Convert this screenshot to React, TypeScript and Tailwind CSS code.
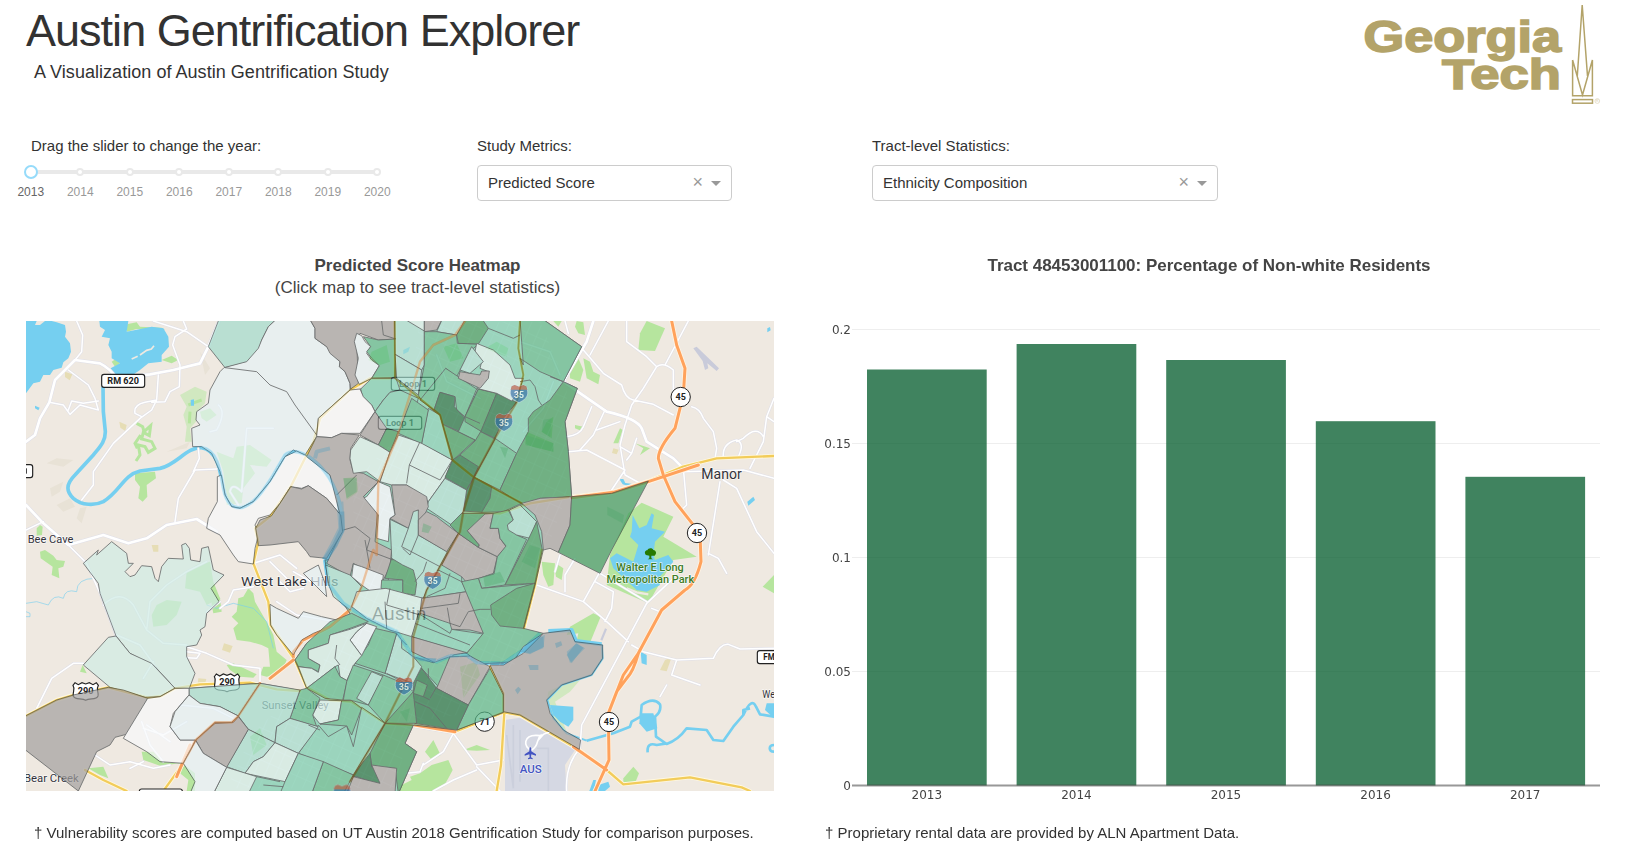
import React from "react";

const years = ["2013", "2014", "2015", "2016", "2017", "2018", "2019", "2020"];

const G = "#a3a09f";
const C1 = "#1d7040";
const C2 = "#3c995c";
const C3 = "#59b788";
const C4 = "#78ccae";
const C5 = "#a3dbcd";
const W3 = "#d0ece5";
const W2 = "#e6f2f6";
const W1 = "#f8fafc";

// [fill, points], painted in order; coordinates are in map units (3 per pixel)
const tracts: [string, string][] = [
  [C4, "1124,10 1565,10 1685,95 1630,200 1672,220 1635,320 1645,410 1655,545 1570,705 1545,810 1510,945 1500,1010 1450,1045 1370,1043 1450,1140 1450,1192 1310,1245 1180,1230 1155,1285 1190,1310 1135,1436 580,1436 620,1357 685,1243 655,1203 507,1140 507,1120 720,1105 850,1128 860,1117 825,1035 860,985 990,895 925,805 915,735 1060,720 1030,545 1075,500 1000,470 1065,290 1020,222 1125,190"],
  [C5, "598,10 565,95 615,158 690,140 718,100 725,75 745,35 772,10"],
  [W2, "772,10 745,35 725,75 715,100 680,140 612,158 600,170 570,225 565,265 530,290 528,315 540,330 515,340 518,395 545,395 575,415 600,470 615,540 635,575 660,580 700,560 750,500 795,425 820,405 855,420 890,365 895,310 990,225 990,205 975,170 958,155 960,140 920,95 885,70 885,40 868,10"],
  [G, "868,10 885,40 885,70 920,95 930,115 960,140 958,155 975,170 990,205 992,222 1015,205 1010,75 1020,55 1075,75 1128,72 1124,10"],
  [W2, "1010,55 1025,62 1035,80 1052,95 1040,115 1055,135 1078,152 1055,190 1018,208 1005,180 1015,130 1003,80"],
  [C3, "1030,65 1075,75 1128,72 1125,188 1055,190 1078,152 1055,130 1040,110 1052,95"],
  [C5, "1124,10 1213,10 1213,150 1205,165 1125,118"],
  [C5, "1125,118 1205,165 1195,240 1130,190"],
  [W3, "1150,10 1213,10 1213,48"],
  [G, "1213,10 1268,10 1250,45 1213,50"],
  [C5, "1268,10 1338,10 1310,60 1250,50"],
  [C3, "1213,50 1250,50 1310,60 1312,85 1375,87 1350,110 1310,185 1277,160 1260,305 1200,250 1195,240 1213,150"],
  [C4, "1022,222 1055,190 1128,190 1140,225 1110,232 1090,255 1065,290 1055,270 1028,245"],
  [C4, "1065,290 1090,255 1110,232 1140,225 1195,250 1170,330 1135,350 1095,340"],
  [W1, "895,310 990,225 1020,222 1030,245 1055,270 1065,290 1020,355 965,355 935,368 890,365"],
  [W1, "604,480 592,485 592,560 565,610 560,640 600,660 640,720 655,740 700,747 705,700 715,660 705,630 715,610 750,600 780,565 812,515 845,520 865,512 920,550 962,600 955,560 930,480 880,432 855,420 830,408 795,425 750,500 700,560 660,580 635,575 615,540"],
  [G, "890,365 935,368 965,355 1018,360 992,400 990,435 1000,470 1030,475 1075,500 1060,515 1030,545 1070,570 1072,600 1065,680 1115,705 1110,755 1090,795 1000,745 990,785 920,745 965,650 960,600 930,480 860,425"],
  [G, "707,640 720,615 755,602 780,565 812,515 845,522 865,512 920,550 962,600 968,650 920,730 870,725 860,710 835,680 750,690 715,692"],
  [G, "1065,290 1100,340 1075,390 1020,360"],
  [C2, "1075,390 1100,340 1135,350 1110,412"],
  [W3, "1020,365 1075,390 1110,412 1080,500 1040,470 1000,475 990,430 992,405"],
  [W3, "1135,360 1180,375 1200,380 1297,435 1275,490 1225,560 1160,510 1115,510 1080,500 1110,412"],
  [W3, "1200,380 1297,435 1260,495 1168,450"],
  [C4, "1225,280 1260,300 1297,435 1205,385"],
  [C3, "1175,250 1225,285 1205,385 1180,375 1135,355"],
  [C3, "1277,160 1370,222 1335,305 1310,285 1305,245 1260,232 1242,285 1200,255"],
  [C1, "1260,232 1305,245 1303,275 1335,310 1320,350 1268,328 1260,300 1242,285"],
  [C3, "1375,222 1430,235 1385,350 1370,378 1315,350 1335,305"],
  [C2, "1375,222 1430,235 1385,350 1335,320 1335,305"],
  [C2, "1268,328 1365,375 1300,435"],
  [C1, "1430,235 1490,262 1450,310 1425,370 1382,350"],
  [C3, "1425,370 1490,415 1440,525 1362,487"],
  [C2, "1382,350 1425,372 1362,487 1320,420 1365,378"],
  [C1, "1320,420 1375,455 1360,490 1340,525 1275,487 1298,435"],
  [C2, "1630,200 1672,220 1635,320 1645,410 1655,545 1560,550 1505,570 1440,525 1490,415 1500,395 1525,350 1525,310 1540,290 1590,255"],
  [C2, "1362,487 1505,565 1450,590 1385,592"],
  [C1, "1362,487 1415,515 1410,550 1385,592 1330,588 1340,525"],
  [C5, "1275,490 1340,525 1330,590 1295,630 1250,600 1220,580 1225,560"],
  [C3, "1500,10 1565,10 1685,95 1630,200 1560,170 1500,130 1510,150"],
  [C2, "1310,60 1338,10 1385,10 1405,40 1375,87 1315,85"],
  [W3, "1370,85 1420,105 1470,150 1485,190 1510,190 1495,235 1475,258 1430,235 1370,220 1405,170 1380,160 1385,140 1365,110"],
  [G, "1320,170 1380,180 1385,168 1408,168 1405,190 1380,220 1315,190"],
  [C5, "1355,95 1390,140 1350,175 1320,165"],
  [G, "1115,510 1160,510 1220,545 1225,575 1195,640 1175,640 1195,585 1185,590 1165,640 1110,610 1125,600"],
  [W2, "1040,545 1075,500 1110,515 1125,600 1110,610 1105,680 1070,670 1075,600 1032,548"],
  [C5, "1110,613 1165,640 1180,590 1195,585 1195,660 1282,710 1210,850 1100,830 1115,725"],
  [G, "1220,590 1250,605 1262,615 1315,655 1280,710 1195,660 1195,615"],
  [G, "1315,655 1375,697 1432,725 1420,775 1340,803 1325,785 1265,750 1285,710"],
  [C2, "1325,595 1420,595 1342,647 1378,690 1375,697 1315,655 1290,630"],
  [G, "1395,597 1420,595 1410,640 1435,640 1440,670 1458,695 1432,725 1375,697 1378,690 1342,647"],
  [C3, "1420,595 1465,585 1480,615 1462,630 1490,660 1520,673 1455,810 1385,820 1375,790 1422,777 1432,725 1458,693 1440,670 1435,640 1410,640"],
  [C5, "1468,585 1500,570 1550,620 1530,670 1490,660 1465,645 1462,630 1480,615"],
  [C2, "1525,673 1550,620 1567,705 1545,805 1455,810"],
  [G, "1505,565 1560,550 1655,545 1650,630 1615,712 1590,700 1570,705 1565,650 1545,600"],
  [C2, "1655,545 1775,535 1885,498 1775,705 1740,775 1615,712 1650,630"],
  [C5, "917,750 990,780 1025,815 990,885 940,845 925,805"],
  [W2, "850,775 895,750 915,805 920,845 890,815"],
  [W2, "750,868 770,880 835,910 850,890 905,905 950,915 930,935 880,955 845,975 820,1020 770,960 752,930"],
  [W2, "1000,747 1025,755 1090,780 1085,820 1100,825 1095,860 1025,810 995,785"],
  [C2, "1115,730 1148,750 1180,765 1190,805 1185,840 1148,835 1148,795 1095,790"],
  [C3, "1085,795 1148,795 1148,835 1083,820"],
  [C4, "1255,765 1325,800 1340,830 1210,850 1220,825"],
  [W3, "1098,820 1210,850 1200,895 1175,965 1110,945 1040,910 995,875 1010,830"],
  [G, "1205,850 1340,830 1375,885 1390,955 1350,945 1295,943 1290,925 1200,895"],
  [C4, "1195,895 1290,955 1295,943 1390,957 1340,1015 1175,965"],
  [G, "1175,965 1340,1013 1300,1020 1285,1040 1245,1043 1175,1010"],
  [C3, "1375,790 1385,820 1545,805 1510,940 1570,955 1510,995 1480,1040 1380,1047 1340,1015 1390,955 1325,800"],
  [C2, "1412,870 1490,820 1545,805 1510,940 1440,933 1415,900"],
  [G, "1510,1015 1570,955 1650,945 1665,980 1748,990 1748,1030 1715,1080 1625,1110 1580,1155 1590,1195 1630,1245 1682,1275 1678,1303 1500,1200 1450,1190 1450,1135 1410,1050 1450,1050"],
  [C3, "1180,1025 1240,1043 1290,1025 1260,1120 1200,1055"],
  [G, "1290,1025 1350,1023 1410,1055 1345,1170 1250,1120"],
  [C3, "1410,1060 1450,1140 1450,1192 1310,1245 1345,1170"],
  [C1, "1205,1060 1250,1120 1345,1170 1310,1245 1185,1225 1180,1135 1180,1100"],
  [C2, "1190,1095 1222,1110 1210,1145 1180,1135"],
  [C2, "1180,1135 1190,1225 1095,1225 1130,1150 1150,1105"],
  [C2, "1095,1225 1180,1230 1155,1285 1190,1310 1135,1436 1125,1360 1055,1355 1050,1315"],
  [C1, "1050,1315 1055,1355 1120,1425 1010,1385 995,1385"],
  [G, "1055,1350 1130,1360 1125,1436 980,1436 1000,1385 1080,1405"],
  [C5, "1130,955 1145,975 1145,1000 1180,1025 1205,1055 1180,1105 1095,1075"],
  [C3, "1065,940 1130,955 1095,1075 1005,1045 1045,990"],
  [C3, "825,1035 860,985 930,920 995,895 1045,920 990,940 930,960 925,985 865,1005 865,1030 900,1050 895,1070 875,1060 835,1055"],
  [W2, "990,975 1010,950 1040,925 1070,935 1025,1022"],
  [W3, "865,1005 925,985 930,960 990,943 1040,925 1010,950 990,975 1025,1022 1005,1045 980,1097 960,1085 955,1050 945,1055 860,1120 835,1055 875,1060 895,1072 900,1050 865,1030"],
  [C3, "860,1120 945,1055 960,1085 982,1097 968,1155 915,1150"],
  [W3, "900,1155 965,1157 955,1215 900,1227 878,1200"],
  [C3, "840,1125 860,1120 900,1150 878,1200 890,1235 810,1210"],
  [C3, "965,1157 995,1157 1025,1180 995,1260 980,1233 900,1227 955,1215"],
  [C4, "1025,1177 1095,1225 1000,1380 835,1315 895,1230 925,1265 980,1233 1000,1295"],
  [C3, "1000,1050 1090,1080 1045,1170 990,1155 970,1155 980,1100"],
  [C5, "1055,1070 1090,1085 1045,1170 1010,1150"],
  [C3, "1090,1080 1150,1105 1180,1130 1095,1225 1045,1170"],
  [C3, "910,1340 1000,1380 970,1436 875,1436"],
  [C5, "507,1120 720,1105 655,1203 600,1175 540,1165 507,1140"],
  [C5, "720,1105 840,1125 810,1210 770,1235 765,1283 685,1243 655,1203"],
  [C5, "770,1235 810,1210 895,1235 835,1315 765,1283"],
  [C5, "685,1243 765,1283 730,1325 700,1340 675,1375 620,1355"],
  [W3, "765,1283 835,1315 795,1400 675,1375 700,1340 730,1325"],
  [W3, "620,1357 710,1385 685,1436 580,1436"],
  [C4, "835,1315 910,1340 875,1436 780,1436 795,1400"],
  [W3, "190,745 235,705 230,720 275,680 320,715 325,745 340,745 315,770 330,785 345,780 365,752 395,755 405,790 415,800 425,755 445,730 490,732 485,690 497,685 508,700 512,735 540,740 545,700 565,695 580,765 612,780 573,820 597,860 560,895 555,935 540,945 545,960 530,990 500,995 500,1025 525,1075 508,1120 465,1120 405,1055 330,1015 288,963 240,835 235,805"],
  [W3, "265,967 288,963 330,1015 395,1045 465,1120 420,1145 375,1147 270,1117 190,1050"],
  [G, "10,1206 110,1155 160,1140 265,1117 310,1125 383,1150 330,1255 285,1267 270,1290 230,1310 175,1428 10,1300"],
  [W1, "383,1150 420,1145 465,1120 507,1120 507,1140 460,1195 450,1235 480,1275 527,1275 490,1345 420,1340 380,1310 310,1270"],
  [W2, "507,1140 540,1165 600,1175 655,1203 635,1222 585,1222 527,1275 480,1275 450,1235 465,1190"],
  [G, "527,1275 585,1225 640,1222 655,1205 685,1243 620,1357 550,1315"],
  [W2, "527,1277 550,1315 620,1357 580,1436 510,1436 525,1400 490,1345"],
];

// thin tract borders that subdivide the polygons above
const borders =
  "M615,158 L710,170 750,210 800,230 825,270 890,360 M1168,450 L1160,505 M1085,18 L1090,60 1128,72 M1405,40 L1480,70 1500,60 M1630,200 L1590,185 M1500,200 L1530,195 1545,215 1555,255 1565,270 M1335,305 L1380,325 M950,540 L1010,480 M970,645 L1005,635 1050,670 1040,705 1120,735 M1035,675 L1050,760 M1165,640 L1145,695 1260,755 M1148,700 L1170,720 1195,660 M1220,740 L1210,770 1185,800 M1290,775 L1275,820 1220,845 M1325,785 L1325,800 M1205,880 L1315,865 1320,835 M1282,878 L1290,925 1320,935 1345,890 1380,883 1412,883 M1185,925 L1350,990 M1225,1060 L1225,1090 M1185,1160 L1230,1180 1280,1240 M1230,1150 L1250,1115 M1210,1145 L1230,1155 M1095,860 L1100,940 M1110,820 L1100,870 1200,900 M1145,975 L1160,990 M865,1230 L900,1245 M730,1410 L790,1415 M710,1385 L780,1400 M950,990 L945,1030 960,1050 M1100,1075 L1165,1110";

const parks = [
  "65,60 72,68 62,85 75,88 62,110 88,112 80,130 60,135 35,125 32,115 45,90 48,68",
  "320,28 350,22 360,35 425,38 435,45 350,42 320,50",
  "425,135 455,122 475,135 455,145",
  "275,140 290,130 300,145 285,155",
  "345,475 405,470 408,490 380,510 382,545 368,560 355,550 360,515 345,495",
  "60,630 68,635 66,660 50,662 50,640",
  "60,710 75,705 100,722 110,735 135,738 130,755 115,760 118,790 95,780 98,755 62,730",
  "590,410 640,430 650,395 690,390 755,435 740,455 690,450 705,475 670,520 665,565 620,570 610,470",
  "540,290 570,280 590,300 560,320 545,310",
  "1860,55 1880,18 1935,40 1905,108 1855,105",
  "1670,18 1690,22 1695,60 1675,55 1665,35",
  "1600,18 1625,18 1615,35",
  "1650,175 1675,130 1690,165 1680,200 1650,190",
  "1690,130 1710,140 1720,170 1740,180 1735,208 1700,190",
  "1665,330 1690,335 1685,348 1665,340",
  "1825,595 1865,563 1960,605 1930,665 2030,725 1960,735 1885,865 1760,810 1770,720",
  "1640,960 1650,935 1720,895 1742,905 1710,983 1670,978 1675,955",
  "1565,740 1605,745 1600,810 1585,815 1570,780",
  "1605,765 1615,750 1630,760 1625,795 1608,785",
  "2228,815 2262,780 2262,835",
  "1810,1390 1840,1355 1857,1375 1845,1405 1810,1408",
  "655,850 670,845 685,820 700,835 705,860 745,930 760,960 770,1010 800,1035 790,1060 770,1080 740,1085 720,1080 730,1055 750,1055 745,1000 725,990 690,980 650,975 640,940 655,925 635,905 650,890",
  "620,1050 640,1045 710,1078 700,1088 660,1085 630,1065",
  "1215,1310 1240,1275 1262,1320 1235,1335",
  "1235,1350 1285,1335 1298,1365 1285,1390 1270,1415 1240,1428 1140,1428 1145,1410 1175,1395 1170,1385 1200,1375",
  "1330,1305 1370,1290 1410,1305 1370,1307",
  "410,870 440,855 485,860 470,900 440,930 400,935 395,900",
  "500,770 530,750 570,740 580,800 600,850 560,870 540,830 495,820",
  "575,815 600,850 605,890 580,895 575,870",
  "365,1310 400,1310 430,1340 490,1348 525,1375 525,1428 500,1428 505,1395 480,1375 480,1345 420,1352 370,1335",
  "205,1360 250,1355 265,1390 240,1380",
  "180,1070 188,1050 200,1075",
  "1270,95 1310,85 1330,130 1290,140",
  "1520,350 1555,365 1600,385 1600,410 1515,390",
  "1580,320 1600,305 1595,370 1565,350",
  "1780,385 1800,340 1808,345 1795,385",
  "1845,385 1890,400 1860,420 1870,400",
  "1045,135 1055,110 1100,90 1110,140 1080,150",
  "970,490 1010,485 1015,530 980,555",
  "1320,1055 1370,1040 1380,1080 1330,1150",
  "690,1265 720,1240 740,1290 700,1320",
  "1395,100 1430,80 1465,100 1460,125 1420,110",
];

const water = [
  "18,18 50,18 45,30 60,30 75,18 95,18 110,22 135,30 138,50 135,65 150,85 153,110 145,130 130,142 125,158 100,165 90,180 70,180 60,200 40,205 18,235",
  "238,18 325,18 320,50 395,35 430,40 445,65 447,95 425,120 425,140 385,145 360,165 330,185 290,185 272,160 300,145 275,130 275,110 265,90 270,70 245,65 255,45 240,35",
  "1838,600 1858,640 1880,630 1895,595 1902,600 1895,640 1935,650 1905,680 1900,720 1905,735 1945,720 1960,740 1915,790 1920,810 1880,830 1850,825 1780,760 1770,730 1790,715 1840,740 1855,690 1830,665 1835,650",
  "1590,1170 1660,1175 1660,1215 1645,1235 1620,1220 1600,1200",
  "1860,1195 1900,1195 1912,1240 1880,1250 1858,1225",
  "1862,1010 1880,1020 1880,1050 1865,1045",
  "2182,560 2200,545 2205,555 2185,572",
  "1150,105 1170,95 1165,110 1150,118",
  "2240,1165 2262,1165 2262,1210 2235,1185",
  "1735,1410 1765,1400 1770,1415 1755,1428 1735,1428",
  "1708,1428 1720,1395 1728,1395 1722,1428",
  "1500,1010 1540,970 1575,960 1570,1000 1530,1015",
  "1640,1010 1670,985 1695,1000 1650,1045",
  "512,255 522,253 522,272 513,272",
  "2242,40 2250,36 2252,46 2242,52",
];

const arterials =
  "M18,380 L45,360 60,310 88,262 105,195 165,135 240,145 Q270,160 290,190 L390,178 460,165 540,145 565,95 597,18 M18,570 L70,625 145,690 250,660 325,685 380,670 440,630 530,612 590,650 M1720,18 L1700,80 1630,200 1760,290 Q1850,310 1865,340 L1880,380 1960,430 1990,460";
const whiteRoads =
  "M170,18 L188,60 185,110 165,135 M400,18 L500,50 565,95 M490,18 L500,42 465,65 458,90 480,150 478,215 450,230 435,260 395,262 M345,295 Q340,270 375,262 L410,255 415,180 M410,255 L395,285 360,310 280,385 220,470 220,510 185,555 M88,262 L130,270 150,298 180,270 235,285 225,250 205,210 145,165 M145,285 L155,258 190,265 235,258 M345,295 L365,305 M18,645 L70,620 M465,620 L475,550 525,465 590,462 M535,400 L538,430 520,470 M145,690 L200,745 240,835 288,963 M50,1180 L95,1090 160,1045 190,1045 M500,995 L560,1015 640,1050 720,1060 720,1100 M500,1010 L540,1015 530,1030 500,1028 M225,1320 L270,1350 330,1340 400,1360 450,1350 M330,1360 L370,1340 M1820,18 L1820,80 1880,125 1910,155 1870,220 1835,270 1815,330 1800,390 1815,480 1870,510 M1765,18 L1710,120 M1635,18 L1645,55 M1690,105 L1750,175 1805,210 Q1815,250 1840,255 L1900,268 1960,300 M2005,18 L1935,150 M1910,155 Q1930,140 1960,165 L1960,230 M2015,275 Q2040,280 2050,310 L2080,350 2090,400 2085,430 M2110,430 Q2105,385 2150,375 Q2175,385 2155,425 M2262,250 L2240,305 2230,380 2190,460 M2230,365 Q2210,330 2170,370 L2150,380 M2240,305 L2262,320 M1990,470 L2170,465 2262,490 M2100,500 L2065,720 M1990,460 L2000,570 1990,580 M2110,495 L2150,520 2210,650 2262,715 M1645,410 L1700,405 1815,465 1765,540 M1680,405 L1720,360 1755,285 M1640,365 Q1680,360 1690,335 L1715,275 M1730,345 L1800,320 M1800,395 L1835,415 1820,435 M1835,415 L1850,370 M1550,810 L1690,860 1760,920 1825,980 M1835,990 L1870,1010 1970,1035 2080,1030 Q2100,985 2125,988 L2160,1002 2262,1000 M1690,860 L1740,770 M1725,800 L1780,830 1775,880 1755,920 M1740,775 L1880,860 M1880,865 L1685,1230 1680,1300 Q1635,1350 1640,1428 M1960,790 L1880,865 M1970,1035 L1955,1080 2040,1110 M1940,1110 L1920,1145 M1665,730 L1635,780 1635,830 M1620,720 L1605,770 M2065,715 L2095,730 2120,775 M1895,880 L1915,888 M1185,1235 L1300,1255 1370,1350 1450,1335 M1300,1255 L1270,1310 1210,1350 M1370,1365 L1300,1395 1240,1428 M1370,1355 L1440,1428 M1160,1375 L1200,1370 1210,1345 M770,860 L830,900 950,920 M780,800 L810,830 850,820 M820,770 L890,810 M750,740 L800,790 M700,745 L780,720 830,760 M600,860 L560,890 M600,880 L625,860 640,825 700,815 M595,270 Q620,290 590,345 L570,350 M680,340 L760,340 M680,340 L665,530 Q635,500 630,530 L655,570 M250,870 Q300,820 340,870 L380,945 430,985 500,990 M380,945 L390,860 440,810 500,770 560,740 M290,960 L360,990 410,1060 M370,1090 L400,1040 M365,1220 L390,1290 430,1340 M370,1240 L430,1260 500,1220 M380,1230 L450,1280 M480,1170 L580,1180 640,1210 M1500,80 L1590,110 1620,180 M1250,120 L1280,200 1380,250 M1510,350 L1570,280 1600,200";

function Shield({ x, y, n }: { x: number; y: number; n: string }) {
  return (
    <g transform={`translate(${x} ${y})`}>
      <path d="M-22,-22 L-13,-26 L0,-21 L13,-26 L22,-22 L26,-8 C29,10 15,20 0,27 C-15,20 -29,10 -26,-8 Z" fill="#2f6aa6" stroke="#dfe9ee" strokeWidth="2" />
      <path d="M-22,-22 L-13,-26 L0,-21 L13,-26 L22,-22 L25,-12 L-25,-12 Z" fill="#b8543f" />
      <text y="12" textAnchor="middle" fontSize="26" fontWeight="700" fill="#fff">{n}</text>
    </g>
  );
}

function Round({ x, y, n }: { x: number; y: number; n: string }) {
  return (
    <g transform={`translate(${x} ${y})`}>
      <circle r="29" fill="#fff" stroke="#222" strokeWidth="3" />
      <text y="9.5" textAnchor="middle" fontSize="27" fontWeight="700" fill="#222">{n}</text>
    </g>
  );
}

function Box({ x, y, w, label, len }: { x: number; y: number; w: number; label: string; len?: number }) {
  return (
    <g transform={`translate(${x} ${y})`}>
      <rect width={w} height="39" rx="7" fill="#fff" stroke="#222" strokeWidth="3.5" />
      <text x={w / 2} y="29" textAnchor="middle" fontSize="27" fontWeight="700" fill="#222" textLength={len} lengthAdjust="spacingAndGlyphs">{label}</text>
    </g>
  );
}

function UsRoute({ x, y }: { x: number; y: number }) {
  return (
    <g transform={`translate(${x} ${y})`}>
      <path d="M-32,-26 L-22,-20 L-11,-26 L0,-22 L11,-26 L22,-20 L32,-26 L38,-18 C30,-6 40,2 37,14 C33,26 12,20 0,27 C-12,20 -33,26 -37,14 C-40,2 -30,-6 -38,-18 Z" fill="#fff" stroke="#222" strokeWidth="3.5" />
      <text y="8" textAnchor="middle" fontSize="26" fontWeight="700" fill="#222" textLength="47" lengthAdjust="spacingAndGlyphs">290</text>
    </g>
  );
}

const yellowRoads = [
  "M1125,190 L1050,190 990,225 900,310 880,380 812,515 750,605 705,640 715,680 700,745 745,860 752,930 825,1035 860,1117 930,1155 995,1160 1095,1225 1185,1230",
  "M18,1203 L110,1155 160,1140 265,1117 383,1148 425,1143 465,1120 540,1108 690,1103 770,1123 840,1128",
  "M1124,18 L1125,190 1260,300 1297,435 1362,487 1505,565",
  "M1500,18 L1495,100 1510,180 1490,262",
  "M1330,593 L1440,595 1530,565 1655,545 1780,530 1885,498 1990,455 2090,430 2262,423",
  "M1453,1192 L1443,1350 1430,1428",
  "M195,1365 L250,1395 320,1428 M430,1428 L490,1345",
  "M1565,705 L1545,810 1512,940",
  "M1410,1055 L1450,1135 1450,1190",
  "M1185,1230 L1305,1250 1450,1192 1500,1200 1678,1305 1760,1365 1810,1408 2010,1387 2165,1417 2190,1428",
];
const loop1 = "M1335,18 L1305,60 1240,90 1200,140 1170,240 1130,370 1075,500 1070,720 1060,705 1025,815 990,885 930,935 850,975 820,1010 820,1035 750,1090";
const us290 = "M720,1105 L655,1203 635,1222 585,1222 527,1275 470,1380";
const i35 = "M1490,262 L1425,370 1362,487 1330,590 1320,650 1280,720 1220,825 1180,965 1180,1055 1095,1225 990,1400";
const orangeRoads = [
  "M1955,18 L1970,90 1995,160 1990,240 1965,340 Q1915,400 1915,430 L1930,480 1965,560 2040,655 2043,740 Q2025,810 1995,825 L1925,885 1855,1015 Q1840,1070 1820,1090 L1790,1130 1765,1195 1767,1335 1725,1428",
  "M1855,1015 L1810,1080 1765,1195",
  "M820,1035 L750,1090 M990,885 L930,935 850,975 M470,1385 L510,1290 M1185,1230 L1305,1250",
  "M1655,548 L1780,532 1885,500 2035,450 M1660,1295 L1760,1365",
];

function MapView() {
  return (
    <svg className="block h-[470px] w-[748px] font-[Roboto,sans-serif]" viewBox="18 18 2244 1410" preserveAspectRatio="none">
      <defs>
        <pattern id="streets" width="30" height="44" patternUnits="userSpaceOnUse" patternTransform="rotate(24)">
          <path d="M0,0 H30 M0,0 V44" stroke="#fff" strokeWidth="3" fill="none" opacity="0.85" />
        </pattern>
      </defs>
      <rect x="0" y="0" width="2300" height="1450" fill="#efe9e1" />
      <g fill="#e8e2d6">
        <path d="M90,520 L130,500 120,530 95,545 Z M80,445 L110,430 160,435 130,455 Z M110,570 L150,550 165,575 130,590 Z M440,410 L510,380 500,400 Z M540,110 L570,160 555,180 Z M180,580 L200,575 185,625 170,610 Z" />
        <path d="M135,170 l22,8 -8,18 -14,-10 Z M298,320 l22,10 -4,18 -15,-10 Z M395,690 l20,0 0,20 -15,0 Z M612,985 l26,8 -8,20 -24,-8 Z M1935,1035 l20,-8 -15,42 -20,-4 Z M535,1090 l24,2 -4,14 -22,0 Z M1780,400 l16,4 -6,14 -14,-4 Z" fill="#e6ddb5" />
      </g>
      <polygon points="480,240 525,215 560,230 555,265 530,290 528,320 510,340 515,380 495,380 500,335 490,300 500,275" fill="#d1e8c0" />
      {parks.map((p) => (
        <polygon key={p} points={p} fill="#b6e59e" />
      ))}
      <path d="M350,325 L368,335 372,350 392,332 388,362 370,352 365,372 395,380 405,400 385,412 375,395 355,390 360,420 348,438 M352,400 L345,385 362,360 M505,270 L525,262 545,255 M510,290 L508,325" fill="none" stroke="#b6e59e" strokeWidth="9" />
      <polygon points="1585,1130 1625,1110 1680,1095 1650,1130 1605,1160 1640,1250 1600,1210 1580,1160" fill="#d1e8c0" />
      <g fill="#d5d8e3">
        <polygon points="1455,1215 1500,1208 1665,1305 1635,1350 1640,1428 1455,1428" />
        <path d="M2020,100 L2030,95 2097,160 2090,168 2062,145 2065,160 2055,165 2048,138 Z" fill="#c9cbda" />
        <path d="M1755,940 l6,3 -14,34 -6,-3 Z" fill="#c9cbda" />
      </g>
      <path d="M1480,1230 V1420 M1500,1245 V1400 M1550,1300 L1585,1300 1585,1428 M1460,1260 L1480,1420" stroke="#cbcfdc" strokeWidth="5" fill="none" />
      {water.map((p) => (
        <polygon key={p} points={p} fill="#75cff0" />
      ))}
      <path d="M335,132 l18,-8 M360,120 l20,-14 14,-4 8,-10" stroke="#efe9e1" strokeWidth="5" fill="none" />
      <path d="M1820,820 L1850,832 1885,838" stroke="#efe9e1" strokeWidth="7" fill="none" />
      <g fill="none" stroke="#75cff0" strokeLinejoin="round">
        <path strokeWidth="11" d="M249,215 L250,290 256,350 C256,380 240,395 220,420 L165,480 C135,510 140,530 160,550 C185,572 225,572 250,560 C300,530 310,480 360,468 L420,460 C470,450 500,395 545,398 C590,405 600,460 610,520 C620,570 640,580 665,578 C710,565 740,510 760,480 L795,420 C820,400 850,412 880,435 C930,475 960,540 965,600 L965,650 920,725" />
        <path strokeWidth="20" d="M960,560 L965,640 940,690 915,735" />
        <path strokeWidth="12" d="M885,430 L890,410 930,400 M915,735 L925,805 970,865 1040,910 1130,950 1160,995 1180,1025 1250,1040 1290,1023 1340,1020 1370,1043 1450,1045 1510,1005 1560,955 M1585,948 L1655,945 1668,978 1745,988" />
        <path strokeWidth="6" d="M1745,988 L1748,1030 1715,1080 1625,1110 1582,1155 1600,1210 1640,1255 1700,1277" />
        <path strokeWidth="8" d="M1700,1277 L1780,1255 1830,1235 1835,1220 1862,1205 1865,1170 Q1900,1145 1920,1168 Q1925,1190 1905,1205 L1908,1265 1940,1287 Q1975,1275 2000,1240 L2060,1245 2080,1275 2110,1278 2140,1235 2170,1200 Q2195,1145 2208,1175 L2220,1198 2262,1205 M1883,1312 Q1880,1280 1910,1290 L1940,1285 M2170,1200 L2170,1185 2190,1180 M2262,1290 C2245,1290 2245,1310 2262,1310" />
        <path strokeWidth="3" opacity="0.6" d="M18,865 L50,860 85,870 Q100,835 130,850 Q135,820 170,830 Q170,790 225,790 M18,890 L30,895 30,905 18,905 M560,870 L590,880 640,865 700,880 740,920 760,1000" />
      </g>
      <path d="M1798,492 l12,0 6,12 18,2 -6,8 -20,-6 Z M45,272 l14,6 -4,8 -10,-6 Z" fill="#75cff0" />
      <polygon points="1200,20 1560,20 1640,210 1640,540 1540,820 1500,1000 1440,1180 1180,1220 1120,1420 620,1420 700,1250 860,1110 1000,900 1000,500 1150,350" fill="url(#streets)" />
      <g fill="none" strokeLinejoin="round" strokeLinecap="round">
        <path d={whiteRoads} stroke="#dfdfe8" strokeWidth="7.5" />
        <path d={arterials} stroke="#dfdfe8" strokeWidth="11" />
        <path d={whiteRoads} stroke="#fff" strokeWidth="4.5" />
        <path d={arterials} stroke="#fff" strokeWidth="8" />
        <path d={yellowRoads.join(" ")} stroke="#fff8e0" strokeWidth="12" />
        <path d={yellowRoads.join(" ")} stroke="#f2cc5a" strokeWidth="7" />
        <path d={[loop1, us290, i35].join(" ")} stroke="#ffa25c" strokeWidth="8" />
        <path d={orangeRoads.join(" ")} stroke="#fff3e2" strokeWidth="14" />
        <path d={orangeRoads.join(" ")} stroke="#ffa25c" strokeWidth="9" />
      </g>
      <path d="M1555,1275 L1570,1258 1590,1250 M1560,1262 C1505,1255 1510,1300 1535,1305 C1560,1290 1545,1275 1565,1258" stroke="#fff" strokeWidth="5" fill="none" />
      <Box x={245} y={178} w={129} label="RM 620" len={95} />
      <Box x={1114} y={187} w={130} label="Loop 1" len={84} />
      <Box x={1075} y={304} w={130} label="Loop 1" len={84} />
      <g>
        <rect x="2212" y="1007" width="100" height="39" rx="7" fill="#fff" stroke="#222" strokeWidth="3.5" />
        <text x="2230" y="1036" fontSize="27" fontWeight="700" fill="#222" textLength="34" lengthAdjust="spacingAndGlyphs">FM</text>
      </g>
      <g>
        <rect x="-42" y="449" width="80" height="39" rx="7" fill="#fff" stroke="#222" strokeWidth="3.5" />
        <path d="M19,460 V476" stroke="#222" strokeWidth="3" />
      </g>
      <rect x="358" y="1422" width="129" height="39" rx="7" fill="#fff" stroke="#222" strokeWidth="3.5" />
      <Round x={1982} y={246} n="45" />
      <Round x={2031} y={654} n="45" />
      <Round x={1767} y={1221} n="45" />
      <Round x={1394} y={1220} n="71" />
      <UsRoute x={197} y={1129} />
      <UsRoute x={621} y={1103} />
      <g fill="#33333b" stroke="#fff" strokeWidth="4" strokeOpacity="0.75" paintOrder="stroke" strokeLinejoin="round">
        <text x="23" y="684" fontSize="34" textLength="137" lengthAdjust="spacingAndGlyphs">Bee Cave</text>
        <text x="663" y="812" fontSize="40" textLength="292" lengthAdjust="spacingAndGlyphs">West Lake Hills</text>
        <text x="1055" y="914" fontSize="57" textLength="164" lengthAdjust="spacingAndGlyphs" fill="#111">Austin</text>
        <text x="2044" y="491" fontSize="42" textLength="121" lengthAdjust="spacingAndGlyphs">Manor</text>
        <text x="725" y="1181" fontSize="34" fill="#4a4f55" textLength="201" lengthAdjust="spacingAndGlyphs">Sunset Valley</text>
        <text x="12" y="1402" fontSize="34" textLength="164" lengthAdjust="spacingAndGlyphs">Bear Creek</text>
        <text x="2227" y="1149" fontSize="34" textLength="38" lengthAdjust="spacingAndGlyphs">We</text>
        <g fill="#3f7d28" textAnchor="middle" fontWeight="500">
          <text x="1890" y="767" fontSize="33" textLength="202" lengthAdjust="spacingAndGlyphs">Walter E Long</text>
          <text x="1891" y="803" fontSize="33" textLength="263" lengthAdjust="spacingAndGlyphs">Metropolitan Park</text>
        </g>
        <text x="1499" y="1375" fontSize="35" fontWeight="500" fill="#4354c2" textLength="66" lengthAdjust="spacingAndGlyphs">AUS</text>
      </g>
      <path d="M1878,720 C1872,714 1875,706 1882,706 C1884,698 1898,698 1900,705 C1909,706 1911,716 1904,722 L1894,722 L1894,730 L1899,733 L1883,733 L1888,730 L1888,722 Z" fill="#267a00" />
      <path transform="translate(1531 1315)" d="M0,-18 C3,-18 3,-12 3,-6 L17,3 V7 L3,3 L2,12 L7,15 V18 L0,16 L-7,18 V15 L-2,12 L-3,3 L-17,7 V3 L-3,-6 C-3,-12 -3,-18 0,-18 Z" fill="#4354c2" />
      <g opacity="0.7" strokeLinejoin="round">
        {tracts.map(([fill, points]) => (
          <polygon key={points} points={points} fill={fill} stroke="#30363a" strokeWidth="2.5" />
        ))}
        <path d={borders} fill="none" stroke="#30363a" strokeWidth="2.5" />
      </g>
      <g fill="none" strokeLinejoin="round">
        <path d={yellowRoads.slice(2, 4).join(" ")} stroke="#7c6a08" strokeOpacity="0.5" strokeWidth="5" />
        <path d={i35} stroke="#6b5a20" strokeOpacity="0.4" strokeWidth="5" />
        <path d={[loop1, us290].join(" ")} stroke="#e09a60" strokeOpacity="0.4" strokeWidth="6" />
        <path d="M545,398 C590,405 600,460 610,520 C620,570 640,580 665,578 C710,565 740,510 760,480 L795,420 C820,400 850,412 880,435 C930,475 960,540 965,600 M925,805 L970,865 1040,910 1130,950 1160,995 1180,1025 1250,1040 1290,1023 1340,1020 1370,1043 1450,1045 1510,1005" stroke="#6fc0e0" strokeOpacity="0.35" strokeWidth="8" />
        <path d="M965,590 L966,645 945,690 915,735" stroke="#5c98b4" strokeOpacity="0.5" strokeWidth="16" />
      </g>
      <g fill="#4f98b5" opacity="0.4">
        <path d="M1502,1010 L1530,975 1570,965 1572,995 1530,1018 Z M1640,1020 L1668,985 1690,998 1655,1045 Z M1525,1050 l30,0 0,15 -25,0 Z M1485,1125 l10,-10 8,8 -10,15 Z M1605,985 l18,-6 4,12 -18,8 Z M1185,1028 L1250,1030 1245,1042 1200,1038 Z" />
      </g>
      <g fill="#4ea56a" opacity="0.35">
        <path d="M1515,360 L1600,385 1600,410 1520,390 Z M1570,315 L1595,310 1590,365 1565,350 Z M1762,575 L1812,600 1808,625 1762,600 Z M1440,395 L1465,400 1455,430 Z M1140,1190 L1170,1180 1160,1220 Z M1390,785 L1440,770 1455,800 1395,815 Z M970,490 L1010,490 1010,530 980,550 Z M1210,625 L1235,635 1225,655 1205,650 Z M1530,690 L1560,700 1545,760 1505,740 Z" />
      </g>
      <g opacity="0.65">
        <Shield x={1497} y={236} n="35" />
        <Shield x={1452} y={322} n="35" />
        <Shield x={1238} y={796} n="35" />
        <Shield x={1152} y={1113} n="35" />
        <Shield x={966} y={1435} n="" />
      </g>
    </svg>
  );
}

const bars = [
  { year: "2013", top: 369.5 },
  { year: "2014", top: 344 },
  { year: "2015", top: 360 },
  { year: "2016", top: 421.2 },
  { year: "2017", top: 476.8 },
];
const ticks: [string, number][] = [["0.2", 329.5], ["0.15", 443.5], ["0.1", 557.5], ["0.05", 671.5], ["0", 785.5]];

function BarChart() {
  return (
    <svg className="block h-[490px] w-[790px] font-['DejaVu_Sans',sans-serif] text-[12px]" viewBox="815 321 790 490">
      <g fill="#444">
        {ticks.map(([t, y]) => (
          <g key={t}>
            {t !== "0" && <path d={`M852,${y} H1600`} stroke="#eee" />}
            <text x="851" y={y + 4.3} textAnchor="end">{t}</text>
          </g>
        ))}
        {bars.map((b, i) => (
          <g key={b.year}>
            <rect x={867 + i * 149.6} y={b.top} width="119.7" height={785.5 - b.top} fill="#005a2a" fillOpacity="0.75" />
            <text x={926.8 + i * 149.6} y="799" textAnchor="middle">{b.year}</text>
          </g>
        ))}
        <path d="M852,785.5 H1600" stroke="#444" strokeOpacity="0.55" strokeWidth="2" />
      </g>
    </svg>
  );
}

function Logo() {
  return (
    <svg className="block h-[110px] w-[250px] font-['Liberation_Sans',Arial,sans-serif]" viewBox="1360 0 250 110" fill="#b3a369">
      <g fontWeight="700" stroke="#b3a369" strokeWidth="1.6">
        <text x="1363.5" y="51.8" fontSize="43.5" textLength="197.5" lengthAdjust="spacingAndGlyphs">Georgia</text>
        <text x="1442" y="89" fontSize="43" textLength="119" lengthAdjust="spacingAndGlyphs">Tech</text>
      </g>
      <g fill="none" stroke="#b3a369" strokeWidth="1.5">
        <path d="M1572.6,60 V95.7 H1592.4 V60 L1582.5,95 L1572.6,60 M1577.3,76 L1582.2,5 L1587.5,76" />
        <rect x="1572.5" y="99.6" width="20" height="3.6" />
      </g>
      <circle cx="1597.3" cy="101" r="2.4" fill="none" stroke="#d8cfae" strokeWidth="0.6" />
      <text x="1597.3" y="102.4" fontSize="4" textAnchor="middle" fill="#d8cfae">R</text>
    </svg>
  );
}

function Select({ value, width }: { value: string; width: string }) {
  return (
    <div className={`mt-[7px] flex h-9 items-center rounded border border-[#ccc] bg-white pr-[10px] pl-[10px] text-[15px] text-[#333] ${width}`}>
      <span className="flex-1">{value}</span>
      <span className="mr-[8px] -mt-[3px] text-[18px] leading-none text-[#999]">×</span>
      <span className="mt-px size-0 border-x-[5px] border-t-[5px] border-x-transparent border-t-[#999]" />
    </div>
  );
}

export default function App() {
  return (
    <div className="h-[861px] w-[1630px] overflow-hidden bg-white font-['Liberation_Sans',Arial,sans-serif] text-[#323232]">
      <header className="flex h-[134px] justify-between pr-5 pl-[26px]">
        <div className="pt-[4px]">
          <h1 className="text-[45px] leading-[54px] tracking-[-0.98px]">Austin Gentrification Explorer</h1>
          <p className="mt-px ml-2 text-[18px] leading-[27px] tracking-[0.04px]">A Visualization of Austin Gentrification Study</p>
        </div>
        <Logo />
      </header>

      <section className="flex h-[116px] text-[15px] leading-6">
        <div className="w-[477px] pl-[31px]">
          <p>Drag the slider to change the year:</p>
          <div className="mt-[7px] flex h-[14px] w-[346px] items-center">
            <div className="flex h-1 w-full items-center justify-between rounded bg-[#e9e9e9]">
              {years.map((y, i) => (
                <span key={y} className="flex w-0 justify-center">
                  {i === 0 ? (
                    <span className="size-[14px] shrink-0 rounded-full border-2 border-[#96dbfa] bg-white" />
                  ) : (
                    <span className="size-2 shrink-0 rounded-full border-2 border-[#e9e9e9] bg-white" />
                  )}
                </span>
              ))}
            </div>
          </div>
          <div className="mt-[4px] -ml-[25px] flex w-[396px] text-center text-[12px] leading-[18px] text-[#999]">
            {years.map((y, i) => (
              <span key={y} className={i === 0 ? "flex-1 text-[#666]" : "flex-1"}>{y}</span>
            ))}
          </div>
        </div>
        <div className="w-[395px]">
          <p>Study Metrics:</p>
          <Select value="Predicted Score" width="w-[255px]" />
        </div>
        <div>
          <p>Tract-level Statistics:</p>
          <Select value="Ethnicity Composition" width="w-[346px]" />
        </div>
      </section>

      <main className="flex pl-[26px]">
        <section className="w-[748px]">
          <div className="h-[71px] pt-[5px] pl-[35px] text-center text-[17px] leading-[22px] text-[#444]">
            <h2 className="font-bold">Predicted Score Heatmap</h2>
            <p>(Click map to see tract-level statistics)</p>
          </div>
          <MapView />
          <p className="mt-[30px] ml-2 text-[15px] leading-6 tracking-[0.01px] whitespace-nowrap">† Vulnerability scores are computed based on UT Austin 2018 Gentrification Study for comparison purposes.</p>
        </section>
        <section className="ml-[41px] w-[790px]">
          <div className="h-[71px] pt-[5px] pr-[2px] text-center text-[17px] leading-[22px] text-[#444]">
            <h2 className="font-bold tracking-[-0.02px]">Tract 48453001100: Percentage of Non-white Residents</h2>
          </div>
          <BarChart />
          <p className="mt-[10px] ml-[10px] text-[15px] leading-6 tracking-[0.01px]">† Proprietary rental data are provided by ALN Apartment Data.</p>
        </section>
      </main>
    </div>
  );
}
